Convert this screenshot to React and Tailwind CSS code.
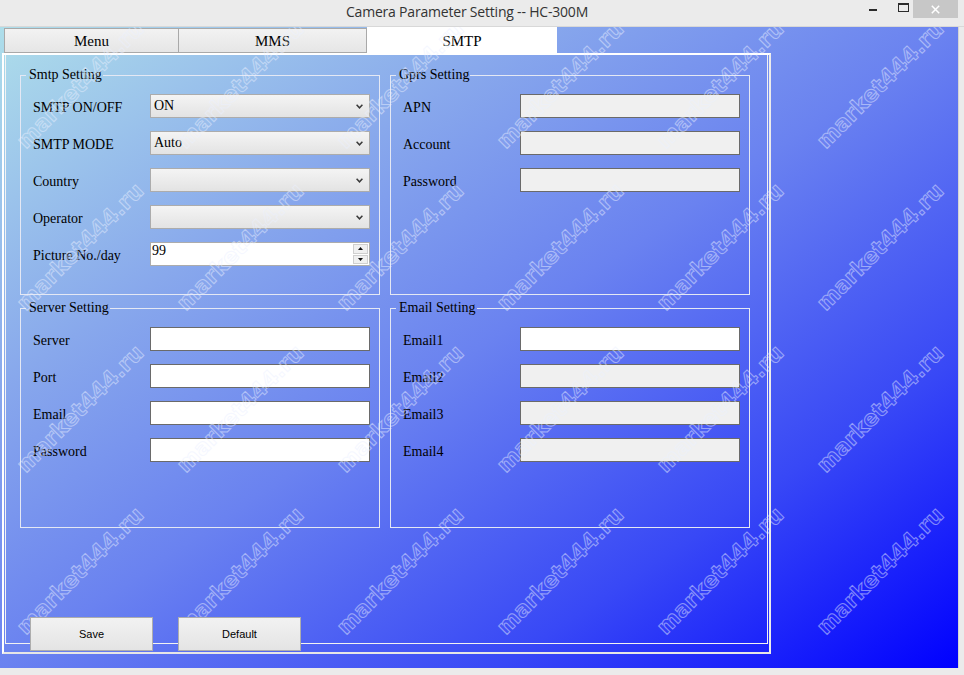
import React from "react";

const serif = "font-['Liberation_Serif','Times_New_Roman',serif]";

function Chevron() {
  return (
    <svg width="7" height="5" viewBox="0 0 7 5" className="shrink-0">
      <path d="M0.6 0.8 L3.5 3.8 L6.4 0.8" stroke="#3a3a3a" strokeWidth="1.5" fill="none" />
    </svg>
  );
}

function Select({ value }) {
  return (
    <div className="w-[220px] h-[24px] border border-[#acacac] bg-[linear-gradient(#f4f4f4,#e3e3e3)] flex items-center pl-[3px] pr-[6px]">
      <span className="flex-1 text-[14px] leading-[16px] text-black">{value}</span>
      <Chevron />
    </div>
  );
}

function Spinner({ value }) {
  return (
    <div className="w-[220px] h-[24px] border border-[#acacac] bg-white flex">
      <span className="flex-1 pl-[1px] text-[14px] leading-[16px] text-black">{value}</span>
      <div className="w-[15px] flex flex-col gap-[1px] my-[1px] mr-[1px]">
        <div className="flex-1 border border-[#cfcfcf] bg-[#f0f0f0] flex items-center justify-center">
          <svg width="5" height="3" viewBox="0 0 5 3"><path d="M0 3 L2.5 0 L5 3 Z" fill="#111" /></svg>
        </div>
        <div className="flex-1 border border-[#cfcfcf] bg-[#f0f0f0] flex items-center justify-center">
          <svg width="5" height="3" viewBox="0 0 5 3"><path d="M0 0 L2.5 3 L5 0 Z" fill="#111" /></svg>
        </div>
      </div>
    </div>
  );
}

function Input({ gray }) {
  return (
    <div
      className={
        gray
          ? "w-[220px] h-[24px] border border-[#6a6a6a] bg-[#f0f0f0]"
          : "w-[220px] h-[24px] border border-[#6a6a6a] bg-white"
      }
    />
  );
}

function Row({ label, children }) {
  return (
    <div className="flex h-[24px]">
      <div className="w-[117px] pt-[6px] text-[14px] leading-[16px] text-black whitespace-nowrap">{label}</div>
      {children}
    </div>
  );
}

function Group({ title, children }) {
  return (
    <fieldset className="border border-[#e4e8f4] h-[228px] pt-[11px] min-w-0">
      <legend className="ml-[5px] pl-[3px] pr-[1px] text-[14px] leading-[16px] text-black">{title}</legend>
      <div className="flex flex-col gap-[13px] pl-[12px] pr-[9px]">{children}</div>
    </fieldset>
  );
}

function Watermarks() {
  const cells = Array.from({ length: 30 });
  return (
    <div className="absolute left-0 top-[-23px] w-[960px] h-[810px] grid grid-cols-[repeat(6,160px)] auto-rows-[162px] pointer-events-none">
      {cells.map((_, i) => (
        <div key={i} className="flex items-center justify-center">
          <span className="-rotate-45 whitespace-nowrap font-['DejaVu_Sans',sans-serif] font-bold text-[22px] leading-none text-[rgba(255,255,255,0.04)] [-webkit-text-stroke:1px_rgba(235,240,255,0.5)]">
            market444.ru
          </span>
        </div>
      ))}
    </div>
  );
}

export default function App() {
  return (
    <div className="w-[964px] h-[675px] bg-[#ebebeb] flex flex-col overflow-hidden">
      {/* Title bar */}
      <div className="h-[27px] shrink-0 flex border-b border-[#d8d8d8] bg-[#ebebeb]">
        <div className="w-[866px] pl-[68px] flex justify-center pt-[3px]">
          <span className="font-['Open_Sans',sans-serif] text-[14px] leading-[18px] text-[#333] tracking-[-0.2px]">
            Camera Parameter Setting -- HC-300M
          </span>
        </div>
        <div className="w-[24px] h-[18px] flex items-start">
          <div className="ml-[3px] mt-[9px] w-[8px] h-[2px] bg-[#2b2b2b]" />
        </div>
        <div className="w-[23px] h-[18px] flex items-start">
          <div className="ml-[8px] mt-[3px] w-[11px] h-[9px] border border-t-2 border-[#2b2b2b]" />
        </div>
        <div className="w-[45px] h-[18px] bg-[#c7c7c7] flex items-center justify-center">
          <svg width="9" height="9" viewBox="0 0 9 9">
            <path d="M0.8 0.8 L8.2 8.2 M8.2 0.8 L0.8 8.2" stroke="#fff" strokeWidth="1.5" />
          </svg>
        </div>
      </div>

      {/* Client area */}
      <div className="flex h-[641px] shrink-0">
        <div
          className={
            "relative w-[958px] h-[641px] overflow-hidden bg-[linear-gradient(to_bottom_right,#aedeea_0%,#88a8ec_28%,#6a82f0_50%,#3848f6_76%,#0000ff_100%)] " +
            serif
          }
        >
          {/* Tabs */}
          <div className="flex items-end h-[26px] pl-[4px]">
            <div className="w-[175px] h-[25px] border border-[#a9a9a9] bg-[linear-gradient(#f2f2f2,#e6e6e6)] flex items-center justify-center text-[15px] leading-[16px] text-black pt-[1px]">
              Menu
            </div>
            <div className="w-[188px] h-[25px] border border-l-0 border-[#a9a9a9] bg-[linear-gradient(#f2f2f2,#e6e6e6)] flex items-center justify-center text-[15px] leading-[16px] text-black pt-[1px]">
              MMS
            </div>
            <div className="w-[190px] h-[26px] bg-white flex items-center justify-center text-[15px] leading-[16px] text-black pt-[1px]">
              SMTP
            </div>
          </div>

          {/* Tab page */}
          <div className="ml-[2px] w-[769px] h-[601px] border-2 border-white border-r-[#ececec] border-b-[#e6e6e6] flex flex-col">
            <div className="mx-[1px] h-[589px] border-x border-b border-[#f2f2f2]">
              <div className="mt-[12px] ml-[14px] grid grid-cols-[360px_360px] gap-x-[10px] gap-y-[5px]">
                <Group title="Smtp Setting">
                  <Row label="SMTP ON/OFF"><Select value="ON" /></Row>
                  <Row label="SMTP MODE"><Select value="Auto" /></Row>
                  <Row label="Country"><Select value="" /></Row>
                  <Row label="Operator"><Select value="" /></Row>
                  <Row label="Picture No./day"><Spinner value="99" /></Row>
                </Group>
                <Group title="Gprs Setting">
                  <Row label="APN"><Input gray /></Row>
                  <Row label="Account"><Input gray /></Row>
                  <Row label="Password"><Input gray /></Row>
                </Group>
                <Group title="Server Setting">
                  <Row label="Server"><Input /></Row>
                  <Row label="Port"><Input /></Row>
                  <Row label="Email"><Input /></Row>
                  <Row label="Password"><Input /></Row>
                </Group>
                <Group title="Email Setting">
                  <Row label="Email1"><Input /></Row>
                  <Row label="Email2"><Input gray /></Row>
                  <Row label="Email3"><Input gray /></Row>
                  <Row label="Email4"><Input gray /></Row>
                </Group>
              </div>
            </div>
            <div className="relative z-10 -mt-[27px] flex gap-[25px] pl-[26px] pb-[1px]">
              <button className="w-[123px] h-[34px] border border-[#adadad] bg-[linear-gradient(#f2f2f2,#e4e4e4)] font-['Liberation_Sans',Arial,sans-serif] text-[11px] text-black">
                Save
              </button>
              <button className="w-[123px] h-[34px] border border-[#adadad] bg-[linear-gradient(#f2f2f2,#e4e4e4)] font-['Liberation_Sans',Arial,sans-serif] text-[11px] text-black">
                Default
              </button>
            </div>
          </div>

          <Watermarks />
        </div>
        <div className="flex-1 bg-[#ebebeb] border-l border-[#d4d4d4]" />
      </div>
    </div>
  );
}
